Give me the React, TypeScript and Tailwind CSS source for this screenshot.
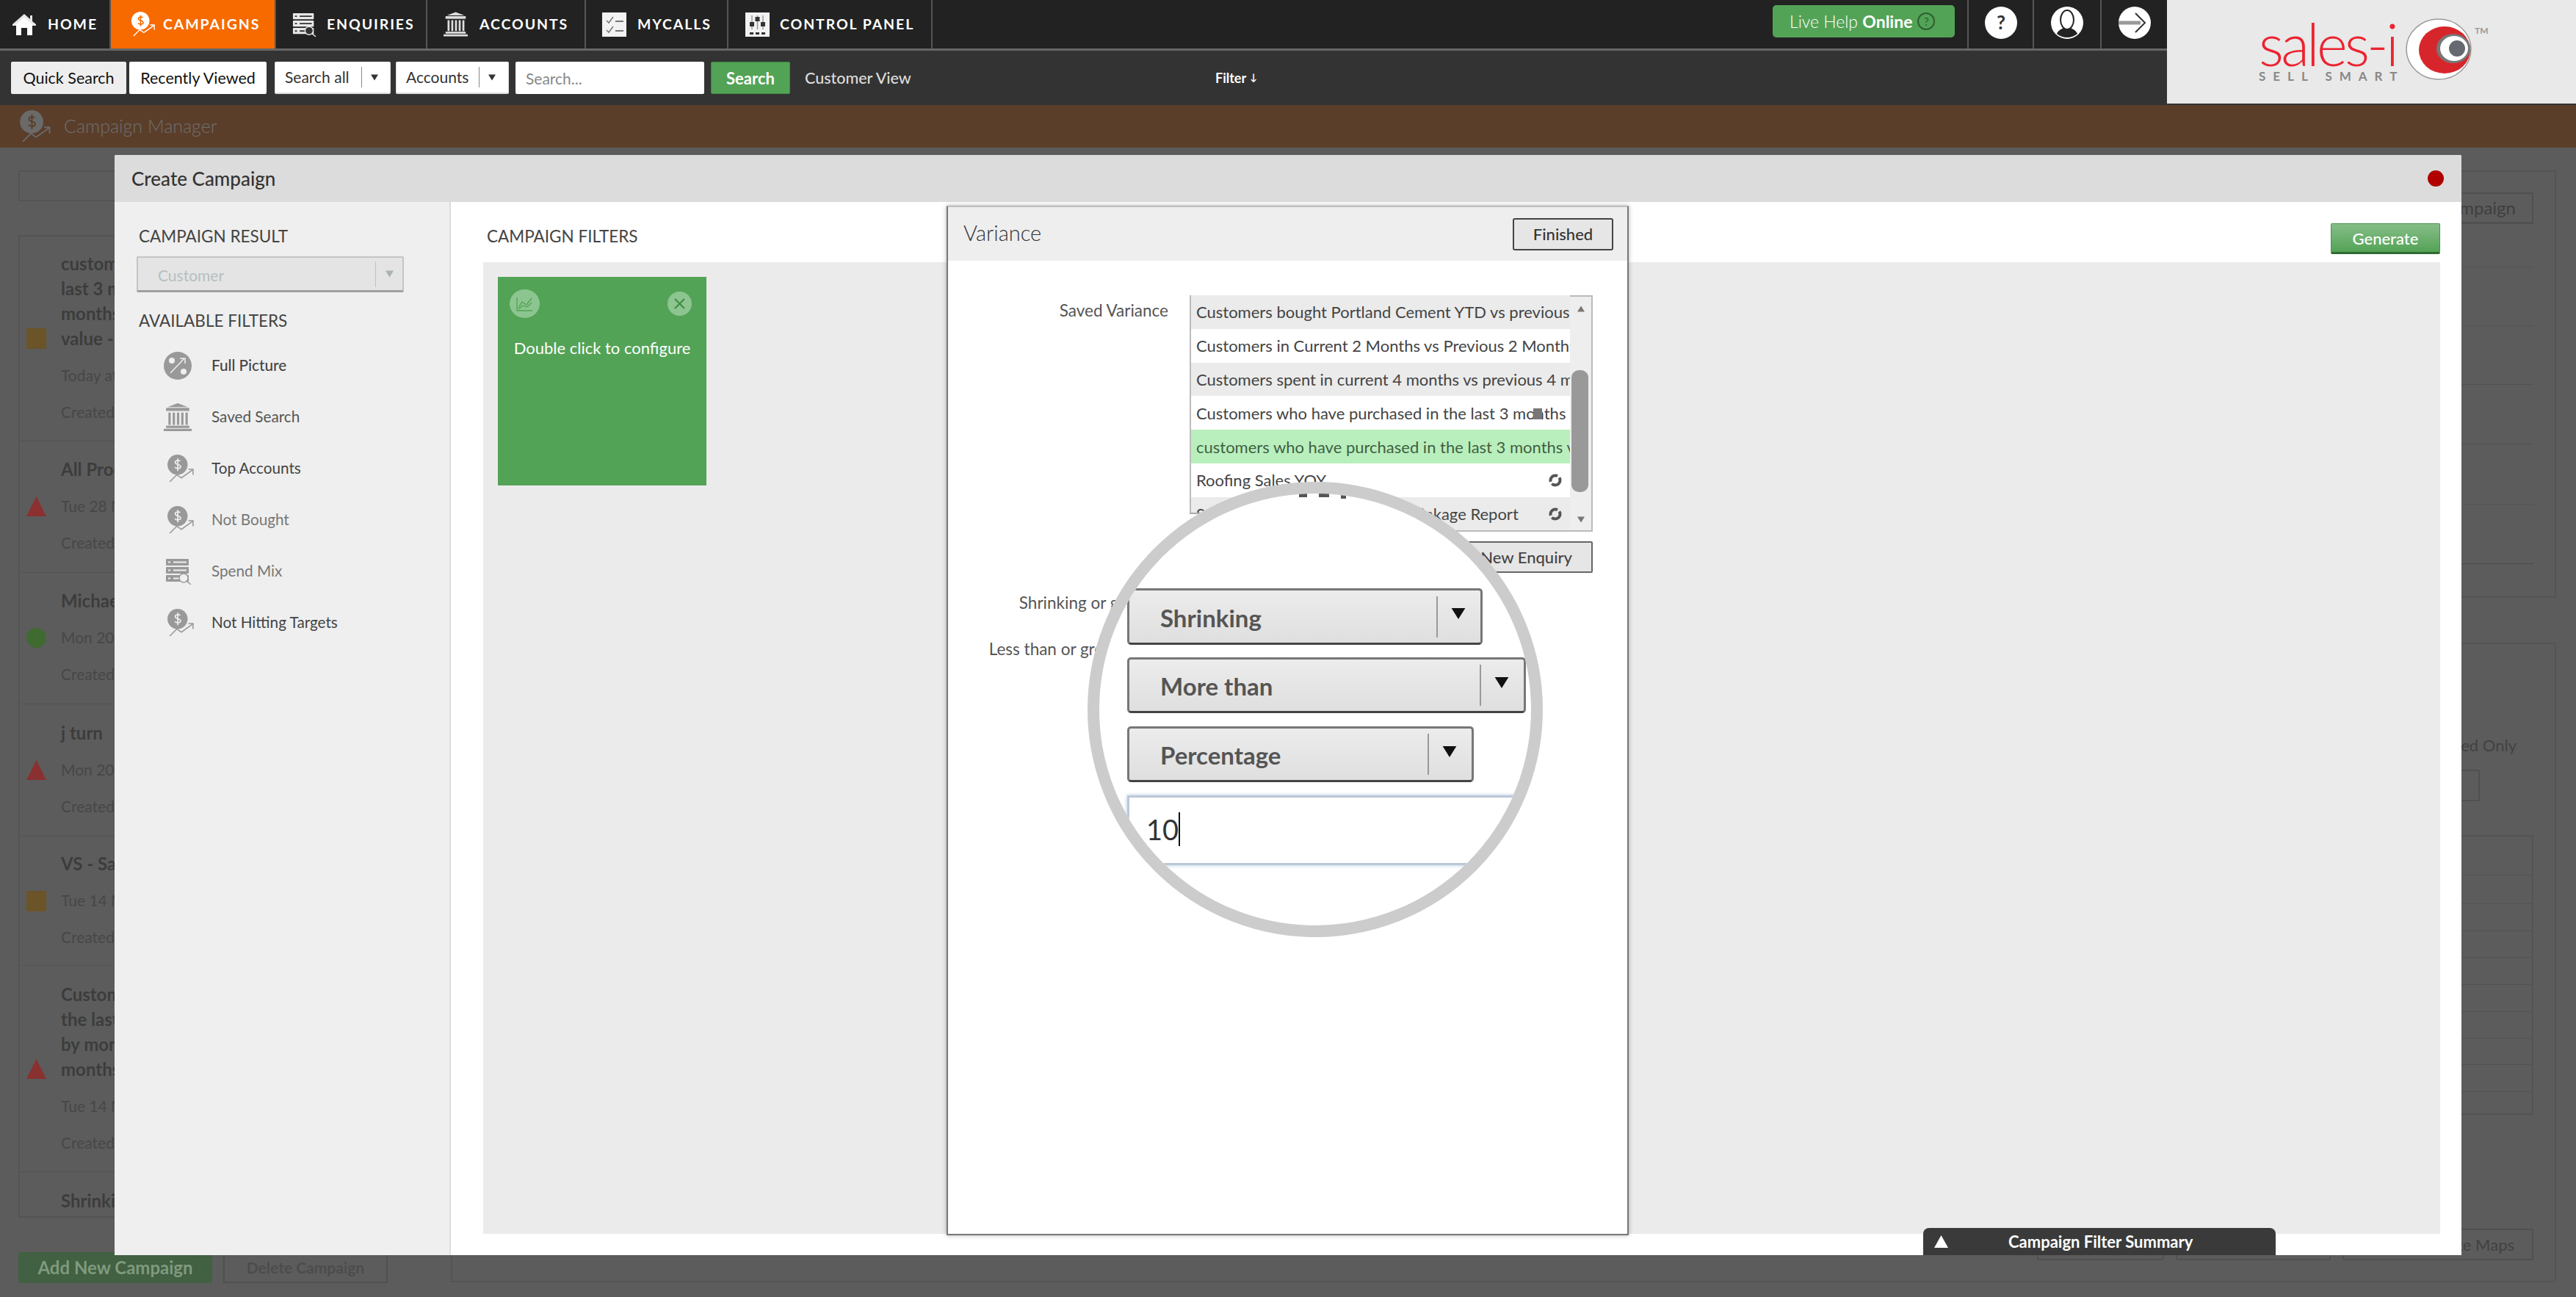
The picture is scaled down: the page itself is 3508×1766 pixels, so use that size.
import React from "react";

type IP = { className?: string; c?: string; d?: string };

const Home = ({ className }: IP) => (
  <svg viewBox="0 0 32 30" className={className}>
    <path d="M16 1 L24 8 V3 H27 V11 L32 15 V17 H0 V15 Z" fill="#e8e8e8" />
    <path d="M5 15 L16 6 L27 15 V30 H20 V20 H12 V30 H5 Z" fill="#fff" />
  </svg>
);
const Coin = ({ className, c = "#999", d = "#eee" }: IP) => (
  <svg viewBox="0 0 36 36" className={className}>
    <circle cx="14" cy="13" r="13" fill={c} />
    <path d="M17.5 8.5C16 7 11 7 11 10c0 3.5 7 2 7 5.5 0 3-5.5 3-7.5 1M14.300 5v16" fill="none" stroke={d} strokeWidth="1.600" />
    <path d="M4 35 L13 26 L19 30 L33 20 M28 19 H34 V26" fill="none" stroke={c} strokeWidth="1.500" />
  </svg>
);
const ListSearch = ({ className, c = "#999", d = "#eee" }: IP) => (
  <svg viewBox="0 0 36 36" className={className}>
    <rect x="1" y="1" width="31" height="9" rx="1" fill={c} />
    <rect x="1" y="12" width="31" height="9" rx="1" fill={c} />
    <rect x="1" y="23" width="31" height="9" rx="1" fill={c} />
    <path d="M4 5.500h3M11 5.500h18M4 16.500h3M11 16.500h18M4 27.500h3M11 27.500h8" stroke={d} strokeWidth="2" />
    <circle cx="25" cy="27" r="6" fill={d} stroke={c} strokeWidth="1.500" />
    <path d="M29.500 31.500 L35 36" stroke={c} strokeWidth="1.500" />
  </svg>
);
const Bank = ({ className, c = "#999" }: IP) => (
  <svg viewBox="0 0 36 36" className={className}>
    <path d="M18 0 L31 5 H5 Z" fill={c} />
    <rect x="3" y="6" width="30" height="4" fill={c} />
    <path d="M6 12h3v16h-3zM11.500 12h3v16h-3zM17 12h3v16h-3zM22.500 12h3v16h-3zM28 12h3v16h-3z" fill={c} />
    <rect x="3" y="29" width="30" height="3" fill={c} />
    <rect x="0" y="33" width="36" height="3" fill={c} />
  </svg>
);
const Check = ({ className }: IP) => (
  <svg viewBox="0 0 33 33" className={className}>
    <rect width="33" height="33" fill="#f2f2f2" />
    <path d="M6 11 L9 14 L15 6 M6 24 L9 27 L15 19" fill="none" stroke="#777" strokeWidth="1.500" />
    <path d="M18 12h11M18 25h11" stroke="#777" strokeWidth="2" />
  </svg>
);
const Sliders = ({ className }: IP) => (
  <svg viewBox="0 0 33 33" className={className}>
    <rect width="33" height="33" fill="#f2f2f2" />
    <path d="M9 4v19M16.500 4v19M24 4v19" stroke="#999" strokeWidth="1.500" />
    <rect x="6" y="13" width="6" height="6" fill="#333" />
    <rect x="13.500" y="6" width="6" height="6" fill="#333" />
    <rect x="21" y="13" width="6" height="6" fill="#333" />
    <path d="M6 27h5v3H6zM14 27h5v3h-5zM22 27h5v3h-5z" fill="#333" />
  </svg>
);
const Percent = ({ className }: IP) => (
  <svg viewBox="0 0 40 38" className={className}>
    <circle cx="20" cy="19" r="19" fill="#999" />
    <circle cx="12" cy="12" r="4" fill="#efefef" />
    <circle cx="28" cy="27" r="4" fill="#efefef" />
    <path d="M10 29 L29 9 M23 9 H30 V16" fill="none" stroke="#efefef" strokeWidth="1.500" />
  </svg>
);
const Tri = ({ className }: IP) => (
  <svg viewBox="0 0 10 8" className={className}>
    <path d="M0 0H10L5 8Z" fill="currentColor" />
  </svg>
);
const Refresh = () => (
  <svg viewBox="0 0 20 20" className="w-5 h-5">
    <circle cx="10" cy="10" r="6.500" fill="none" stroke="#555" strokeWidth="4" strokeDasharray="15 3" />
  </svg>
);

const navItems = [
  { label: "HOME", Icon: Home, w: "w-[151px]", pad: "pl-[17px]", gap: "gap-[16px]", ic: "w-[32px] h-[30px]" },
  { label: "CAMPAIGNS", Icon: Coin, w: "w-[225px]", pad: "pl-[27px]", gap: "gap-[10px]", ic: "w-[34px] h-[34px]", active: true },
  { label: "ENQUIRIES", Icon: ListSearch, w: "w-[206px]", pad: "pl-[22px]", gap: "gap-[14px]", ic: "w-[33px] h-[33px]" },
  { label: "ACCOUNTS", Icon: Bank, w: "w-[216px]", pad: "pl-[22px]", gap: "gap-[16px]", ic: "w-[33px] h-[34px]" },
  { label: "MYCALLS", Icon: Check, w: "w-[194px]", pad: "pl-[22px]", gap: "gap-[15px]", ic: "w-[33px] h-[33px]" },
  { label: "CONTROL PANEL", Icon: Sliders, w: "w-[278px]", pad: "pl-[23px]", gap: "gap-[14px]", ic: "w-[33px] h-[35px]" },
];

const TopNav = () => (
  <div className="h-[69px] bg-[#222222] border-b-[3px] border-[#666666] flex">
    {navItems.map((n) => (
      <div
        key={n.label}
        className={`${n.w} ${n.pad} ${n.gap} flex items-center border-r-2 border-[#555555] text-white text-[19.500px] font-bold tracking-[1.900px] whitespace-nowrap ${n.active ? "bg-[#f66a00]" : ""}`}
      >
        {n.active ? <n.Icon className={n.ic} c="#fff" d="#f66a00" /> : n.label === "ENQUIRIES" ? <n.Icon className={n.ic} c="#e8e8e8" d="#333" /> : n.label === "ACCOUNTS" ? <n.Icon className={n.ic} c="#ddd" /> : <n.Icon className={n.ic} />}
        <span>{n.label}</span>
      </div>
    ))}
    <div className="ml-auto flex items-start">
      <div className="mt-[7px] mr-[17px] w-[248px] h-[44px] rounded-[5px] bg-[#53a356] flex items-center pl-[23px] gap-[7px] text-white text-[23px] whitespace-nowrap">
        <span className="font-light">Live Help <b className="font-bold">Online</b></span>
        <span className="w-[24px] h-[24px] rounded-full border-2 border-[#2f5f32] text-[15px] leading-[20px] text-center text-[#2f5f32]">?</span>
      </div>
      <div className="w-[89px] h-[66px] border-l-2 border-[#555555] flex items-center justify-center pb-[4px]">
        <svg viewBox="0 0 44 44" className="w-[44px] h-[44px]">
          <circle cx="22" cy="22" r="22" fill="#fff" />
          <text x="22" y="31" textAnchor="middle" fontSize="26" fontWeight="700" fill="#333" fontFamily="Lato, sans-serif">?</text>
        </svg>
      </div>
      <div className="w-[92px] h-[66px] border-l-2 border-[#555555] flex items-center justify-center pb-[4px]">
        <svg viewBox="0 0 44 44" className="w-[44px] h-[44px]">
          <circle cx="22" cy="22" r="22" fill="#fff" />
          <path d="M8 37 C10 32 14 31 17 29 H27 C30 31 34 32 36 37 A22 22 0 0 1 8 37Z" fill="#222" />
          <ellipse cx="22" cy="18" rx="9" ry="13" fill="#fff" stroke="#222" strokeWidth="2" />
        </svg>
      </div>
      <div className="w-[91px] h-[66px] border-l-2 border-[#555555] flex items-center justify-center pb-[4px]">
        <svg viewBox="0 0 44 44" className="w-[44px] h-[44px]">
          <circle cx="22" cy="22" r="22" fill="#fff" />
          <path d="M0 22H30" stroke="#999" strokeWidth="5" />
          <path d="M23 9 L36 22 L23 35" fill="none" stroke="#333" strokeWidth="2" />
        </svg>
      </div>
    </div>
  </div>
);

const MiniSelect = ({ label, w, div }: { label: string; w: string; div: string }) => (
  <div className={`${w} h-[44px] bg-white border-b-2 border-x border-[#dddddd] rounded-[2px] flex items-center pl-[13px] text-[21px] text-[#333333] whitespace-nowrap`}>
    <span className={div}>{label}</span>
    <span className="w-px h-[28px] bg-[#888888]" />
    <Tri className="w-[10px] h-[9px] ml-[12px] text-[#333333]" />
  </div>
);

const SearchBar = () => (
  <div className="h-[74px] bg-[#333333] flex items-center pl-[15px] whitespace-nowrap text-[21.500px]">
    <div className="w-[157px] h-[44px] bg-[#eeeeee] flex items-center justify-center text-[#111111] rounded-[2px]">Quick Search</div>
    <div className="w-[187px] h-[44px] ml-[4px] bg-white flex items-center justify-center text-[#111111] rounded-[2px]">Recently Viewed</div>
    <div className="ml-[11px]"><MiniSelect label="Search all" w="w-[158px]" div="w-[104px]" /></div>
    <div className="ml-[7px]"><MiniSelect label="Accounts" w="w-[154px]" div="w-[99px]" /></div>
    <input readOnly placeholder="Search..." className="ml-[9px] w-[257px] h-[44px] bg-white pl-[14px] text-[21px] rounded-[2px] placeholder:text-[#888888] outline-none" />
    <div className="ml-[9px] w-[108px] h-[44px] bg-[#53a356] border border-[#3c8a40] text-white text-[22px] font-bold flex items-center justify-center rounded-[2px]">Search</div>
    <div className="ml-[20px] w-[148px] text-[#dddddd] text-[21.500px] font-medium">Customer View</div>
    <div className="ml-[411px] text-white font-bold text-[18px] flex items-center gap-[5px]">Filter <span className="text-[13px]">↓</span></div>
  </div>
);

const Logo = () => (
  <div className="w-[557px] h-[141px] bg-[#e9e9e9] flex items-start pl-[125px] pt-[25px] relative">
    <div className="flex flex-col w-[200px]">
      <div className="text-[80px] leading-[58px] mt-[5px] font-light tracking-[-3.800px] text-[#ec2330] whitespace-nowrap h-[58px]">sales-i</div>
      <div className="text-[17px] leading-[14px] mt-[9px] font-bold tracking-[10px] text-[#888888] whitespace-nowrap">SELL SMART</div>
    </div>
    <svg viewBox="0 0 90 84" className="w-[90px] h-[84px]">
      <ellipse cx="45" cy="42" rx="44" ry="41" fill="#fff" stroke="#999" strokeWidth="1.500" />
      <ellipse cx="53" cy="43" rx="35" ry="32" fill="#d7262b" />
      <ellipse cx="65" cy="41" rx="23" ry="20" fill="#777" />
      <ellipse cx="66" cy="41" rx="19" ry="17" fill="#fff" />
      <circle cx="70" cy="41" r="11" fill="#666a70" />
    </svg>
    <span className="text-[12px] font-bold text-[#999999] mt-[8px] ml-[4px]">TM</span>
  </div>
);

const Row = ({ children, mark, h, start }: { children: React.ReactNode; mark?: "sq" | "tri" | "dot"; h: string; start?: boolean }) => (
  <div className={`${h} border-b border-[#535353] last:border-b-0 flex ${start ? "items-start pt-[22px]" : "items-center"} pl-[9px] gap-[20px] whitespace-nowrap overflow-hidden`}>
    <div className="w-[27px] flex justify-center shrink-0">
      {mark === "sq" && <div className="w-[27px] h-[28px] bg-[#6a5428]" />}
      {mark === "dot" && <div className="w-[27px] h-[27px] rounded-full bg-[#3f6b30]" />}
      {mark === "tri" && (
        <svg viewBox="0 0 27 27" className="w-[27px] h-[27px]">
          <path d="M13.500 0L27 27H0Z" fill="#8a3030" />
        </svg>
      )}
    </div>
    <div className={start ? "" : "pb-[3px]"}>{children}</div>
  </div>
);
const T = ({ children }: { children: React.ReactNode }) => <div className="text-[24px] leading-[34px] font-bold text-[#3c3c3c]">{children}</div>;
const M = ({ children, first }: { children: React.ReactNode; first?: boolean }) => (
  <div className={`text-[21px] leading-[30px] text-[#474747] ${first ? "mt-[18px]" : "mt-[20px]"}`}>{children}</div>
);

const PageBehind = () => (
  <div className="flex pl-[25px] pt-[31px] gap-[24px]">
    <div className="w-[565px] flex flex-col">
      <div className="h-[42px] border-2 border-[#545454]" />
      <div className="mt-[46px] h-[1338px] border-2 border-[#545454] flex flex-col">
        <Row h="h-[279px]" mark="sq"><T>customers</T><T>last 3 months</T><T>months</T><T>value -</T><M first>Today at</M><M>Created by</M></Row>
        <Row h="h-[179px]" mark="tri"><T>All Products</T><M first>Tue 28 Mar</M><M>Created by</M></Row>
        <Row h="h-[179px]" mark="dot"><T>Michael</T><M first>Mon 20 Mar</M><M>Created by</M></Row>
        <Row h="h-[181px]" mark="tri"><T>j turn</T><M first>Mon 20 Mar</M><M>Created by</M></Row>
        <Row h="h-[176px]" mark="sq"><T>VS - Sales</T><M first>Tue 14 Mar</M><M>Created by</M></Row>
        <Row h="h-[281px]" mark="tri"><T>Customers</T><T>the last</T><T>by month</T><T>months</T><M first>Tue 14 Mar</M><M>Created by</M></Row>
        <Row h="h-[60px]" start><T>Shrinking</T></Row>
      </div>
      <div className="mt-[47px] flex gap-[15px]">
        <div className="w-[264px] h-[42px] bg-[#426042] rounded-[2px] text-[#7f9a7f] text-[24px] font-bold flex items-center justify-center whitespace-nowrap">Add New Campaign</div>
        <div className="w-[224px] h-[42px] border-2 border-[#505050] rounded-[2px] text-[#4c4c4c] text-[21px] font-bold flex items-center justify-center whitespace-nowrap">Delete Campaign</div>
      </div>
    </div>
    <div className="w-[2867px] flex flex-col">
      <div className="h-[582px] border-2 border-[#545454] flex flex-col items-end pr-[29px] pt-[28px]">
        <div className="w-[250px] h-[43px] border-2 border-[#505050] border-b-[3px] rounded-[2px] flex items-center justify-end pr-[22px] text-[#3f3f3f] text-[24px]">Campaign</div>
        <div className="w-[2000px] h-[59px] border-b border-[#535353]" />
        <div className="w-[2000px] h-[80px] border-b border-[#535353]" />
        <div className="w-[2000px] h-[80px] border-b border-[#535353]" />
        <div className="w-[2000px] h-[81px] border-b border-[#535353]" />
        <div className="w-[2000px] h-[82px] border-b border-[#535353]" />
        <div className="w-[2000px] h-[81px] border-b border-[#4c4c4c]" />
      </div>
      <div className="mt-[61px] h-[871px] border-2 border-[#545454] flex flex-col items-end pr-[29px] pt-[124px]">
        <div className="leading-[28px] text-[22px] text-[#424242] pr-[23px] whitespace-nowrap">Shared Only</div>
        <div className="mt-[19px] mr-[73px] w-[200px] h-[43px] border-2 border-[#505050] rounded-[2px]" />
        <div className="mt-[46px] w-[2000px] border-2 border-[#545454] flex flex-col">
          <div className="h-[53px] border-b border-[#535353]" />
          <div className="h-[39px] border-b border-[#535353]" />
          <div className="h-[37px] border-b border-[#535353]" />
          <div className="h-[36px] border-b border-[#535353]" />
          <div className="h-[37px] border-b border-[#535353]" />
          <div className="h-[37px] border-b border-[#535353]" />
          <div className="h-[36px] border-b border-[#535353]" />
          <div className="h-[36px] border-b border-[#535353]" />
          <div className="h-[37px] border-b border-[#535353]" />
          <div className="h-[29px]" />
        </div>
        <div className="mt-[155px] flex gap-[16px]">
          <div className="w-[173px] h-[43px] border-2 border-[#505050] rounded-[2px]" />
          <div className="w-[211px] h-[43px] border-2 border-[#505050] rounded-[2px]" />
          <div className="w-[260px] h-[43px] border-2 border-[#505050] rounded-[2px] flex items-center justify-end pr-[24px] text-[22px] text-[#424242]">Route Maps</div>
        </div>
      </div>
    </div>
  </div>
);

const filters = [
  { label: "Full Picture", Icon: Percent, ic: "w-[40px] h-[38px]", cls: "text-[#444444] font-medium", ml: "" },
  { label: "Saved Search", Icon: Bank, ic: "w-[40px] h-[38px]", cls: "text-[#555555]", ml: "" },
  { label: "Top Accounts", Icon: Coin, ic: "w-[38px] h-[38px]", cls: "text-[#444444]", ml: "ml-[5px]" },
  { label: "Not Bought", Icon: Coin, ic: "w-[38px] h-[38px]", cls: "text-[#777777]", ml: "ml-[5px]" },
  { label: "Spend Mix", Icon: ListSearch, ic: "w-[38px] h-[36px]", cls: "text-[#777777]", ml: "ml-[2px]" },
  { label: "Not Hitting Targets", Icon: Coin, ic: "w-[38px] h-[38px]", cls: "text-[#444444]", ml: "ml-[5px]" },
];

const Sidebar = () => (
  <div className="w-[458px] shrink-0 bg-[#efefef] border-r-2 border-[#dddddd] pl-[33px]">
    <div className="mt-[33px] text-[22.500px] leading-[28px] text-[#444444] whitespace-nowrap">CAMPAIGN RESULT</div>
    <div className="mt-[13px] -ml-[3px] w-[364px] h-[49px] bg-[#e4e4e4] border-2 border-[#c4c4c4] border-b-[3px] border-b-[#a0a0a0] rounded-[2px] flex items-center pl-[27px] text-[21px] text-[#b5bfc0]">
      <span className="w-[296px] pt-[3px]">Customer</span>
      <span className="w-px h-[35px] bg-[#c0c0c0]" />
      <Tri className="w-[11px] h-[10px] ml-[13px] text-[#a9b2b3]" />
    </div>
    <div className="mt-[25px] text-[22.500px] leading-[28px] text-[#444444] whitespace-nowrap">AVAILABLE FILTERS</div>
    <div className="mt-[12px] flex flex-col pl-[33px]">
      {filters.map((f) => (
        <div key={f.label} className="h-[70px] flex items-center text-[20.700px] whitespace-nowrap">
          <div className="w-[66px]">
            <div className={f.ml}><f.Icon className={f.ic} c="#999" d="#efefef" /></div>
          </div>
          <span className={f.cls}>{f.label}</span>
        </div>
      ))}
    </div>
  </div>
);

const rows = [
  { t: "Customers bought Portland Cement YTD vs previous year", bg: "bg-[#ebebeb]" },
  { t: "Customers in Current 2 Months vs Previous 2 Months", bg: "bg-white" },
  { t: "Customers spent in current 4 months vs previous 4 months", bg: "bg-[#ebebeb]" },
  { t: "Customers who have purchased in the last 3 months", bg: "bg-white", lock: true },
  { t: "customers who have purchased in the last 3 months vs", bg: "bg-[#b9efbd]", c: "text-[#3f5f42]" },
  { t: "Roofing Sales YOY", bg: "bg-white", r: true },
  { t: "Sales Group Monthly Spend Shrinkage Report", bg: "bg-[#ebebeb]", r: true },
];

const Dropdown = ({ label, w, mt, h }: { label: string; w: string; mt: string; h: string }) => (
  <div className={`${w} ${mt} ${h} shrink-0 bg-gradient-to-b from-[#ececec] to-[#dfdfdf] border-[3px] border-[#777777] border-b-[#444444] rounded-[5px] flex items-center pl-[42px] pr-[20px] text-[33px] font-bold text-[#555555] whitespace-nowrap`}>
    <span className="flex-1 pt-[4px]">{label}</span>
    <span className="w-[2px] h-[56px] bg-[#999999]" />
    <Tri className="w-[20px] h-[15px] ml-[18px] -mt-[8px] text-[#111111]" />
  </div>
);

const Variance = () => (
  <div className="absolute left-[1133px] top-[69px] w-[929px] h-[1402px] bg-white border-2 border-[#777777] border-t-[#bbbbbb] shadow-[0_0_6px_rgba(0,0,0,0.3)] flex flex-col">
    <div className="h-[73px] bg-[#eeeeee] flex items-center justify-between pl-[21px] pr-[19px]">
      <span className="text-[29px] font-light text-[#333333] -mt-[4px]">Variance</span>
      <div className="w-[137px] h-[44px] bg-[#e6e6e6] border-2 border-[#444444] rounded-[3px] flex items-center justify-center text-[22px] font-medium text-[#333333]">Finished</div>
    </div>
    <div className="pt-[47px] flex">
      <div className="w-[300px] text-right text-[22.500px] leading-[24px] mt-[9px] text-[#555555]">Saved Variance</div>
      <div className="ml-[29px] w-[549px] h-[322px] border-2 border-[#bbbbbb] relative flex">
        <div className="flex-1 min-w-0 flex flex-col -mt-[2px] overflow-hidden">
          {rows.map((r) => (
            <div key={r.t} className={`h-[45.800px] shrink-0 ${r.bg} ${r.c ?? "text-[#444444]"} relative flex items-center pl-[7px] text-[22px] whitespace-nowrap overflow-hidden`}>
              {r.t}
              {r.lock && <span className="absolute right-[38px] top-[17px] w-[12px] h-[15px] bg-[#777777]" />}
              {r.r && <span className="absolute right-[10px] top-[13px]"><Refresh /></span>}
            </div>
          ))}
        </div>
        <div className="w-[29px] shrink-0 bg-[#eeeeee] flex flex-col items-center relative">
          <Tri className="w-[10px] h-[9px] mt-[12px] rotate-180 text-[#777777]" />
          <div className="absolute left-[2px] top-[100px] w-[23px] h-[166px] rounded-[10px] bg-[#999999]" />
          <Tri className="w-[10px] h-[9px] mt-auto mb-[10px] text-[#777777]" />
        </div>
        <div className="absolute -left-[2px] -bottom-[2px] w-[300px] h-[26px] bg-white border-t-2 border-[#aaaaaa]" />
      </div>
    </div>
    <div className="self-end mr-[47px] mt-[13px] w-[188px] h-[43px] bg-[#e6e6e6] border-2 border-[#666666] rounded-[2px] flex items-center justify-end pr-[26px] text-[22px] font-medium text-[#444444]">New Enquiry</div>
    <div className="w-[300px] text-right text-[22.500px] leading-[24px] mt-[29px] text-[#555555] whitespace-nowrap">Shrinking or growing</div>
    <div className="w-[300px] text-right text-[22.500px] leading-[24px] mt-[39px] text-[#555555] whitespace-nowrap">Less than or greater than</div>
    <div className="absolute left-[190px] top-[374px] w-[620px] h-[620px] rounded-full border-[16px] border-[#cccccc] bg-white overflow-hidden flex flex-col items-start pl-[38px] pt-[129px]">
      <div className="absolute left-[272px] top-0 flex items-start gap-[16px]">
        <span className="w-[11px] h-[5px] bg-[#555555]" />
        <span className="w-[14px] h-[5px] bg-[#555555]" />
        <span className="w-[7px] h-[7px] bg-[#555555]" />
      </div>
      <Dropdown label="Shrinking" w="w-[484px]" mt="" h="h-[77px]" />
      <Dropdown label="More than" w="w-[543px]" mt="mt-[17px]" h="h-[76px]" />
      <Dropdown label="Percentage" w="w-[472px]" mt="mt-[18px]" h="h-[76px]" />
      <div className="mt-[18px] w-[600px] h-[95px] shrink-0 bg-white border-[3px] border-[#bcc8d6] shadow-[0_0_5px_rgba(120,160,210,0.6)] flex items-center pl-[23px] pb-[4px] text-[38px] text-[#333333]">
        <span className="border-r-2 border-[#111111] leading-[46px]">10</span>
      </div>
    </div>
  </div>
);

const Modal = () => (
  <div className="absolute left-[156px] top-[211px] w-[3196px] h-[1498px] flex flex-col rounded-t-[2px] overflow-hidden bg-white">
    <div className="h-[64px] shrink-0 bg-[#dcdcdc] flex items-center justify-between pl-[23px] pr-[24px]">
      <span className="text-[26px] font-medium text-[#333333]">Create Campaign</span>
      <span className="w-[22px] h-[22px] rounded-full bg-[#b00000]" />
    </div>
    <div className="flex flex-1 min-h-0">
      <Sidebar />
      <div className="flex-1 flex flex-col pl-[44px] pr-[29px] pb-[29px]">
        <div className="h-[82px] shrink-0 flex justify-between items-start">
          <span className="mt-[33px] ml-[5px] text-[22.500px] leading-[28px] text-[#444444]">CAMPAIGN FILTERS</span>
          <div className="mt-[29px] w-[149px] h-[42px] bg-gradient-to-b from-[#86bd88] to-[#53a356] border border-[#4a924d] border-b-[3px] border-b-[#2f6b33] rounded-[2px] text-white text-[22px] font-medium flex items-center justify-center">Generate</div>
        </div>
        <div className="flex-1 bg-[#ebebeb] pl-[20px] pt-[20px]">
          <div className="w-[284px] h-[284px] bg-[#53a356] flex flex-col">
            <div className="flex items-start justify-between pl-[16px] pr-[20px] pt-[17px]">
              <svg viewBox="0 0 41 39" className="w-[41px] h-[39px]">
                <ellipse cx="20.500" cy="19.500" rx="20.500" ry="19.500" fill="#8cc58f" />
                <path d="M10 11V29H31M12 25L17 17L23 21L30 12M12 27L18 22L24 24L30 18" fill="none" stroke="#53a356" strokeWidth="1.300" />
              </svg>
              <svg viewBox="0 0 33 33" className="w-[33px] h-[33px] mt-[3px]">
                <circle cx="16.500" cy="16.500" r="16.500" fill="#8cc58f" />
                <path d="M10 10L23 23M23 10L10 23" stroke="#3f8a42" strokeWidth="2" />
              </svg>
            </div>
            <div className="mt-[24px] text-center text-white text-[22px] whitespace-nowrap">Double click to configure</div>
          </div>
        </div>
      </div>
    </div>
    <Variance />
    <div className="absolute left-[2463px] bottom-0 w-[480px] h-[37px] bg-[#3a3a3a] rounded-t-[8px] flex items-center pl-[15px] text-white text-[22px] font-bold whitespace-nowrap">
      <svg viewBox="0 0 19 17" className="w-[19px] h-[17px]"><path d="M9.500 0L19 17H0Z" fill="#fff" /></svg>
      <span className="ml-[82px]">Campaign Filter Summary</span>
    </div>
  </div>
);

export default function App() {
  return (
    <div className="relative w-[3508px] h-[1766px] overflow-hidden bg-[#5c5c5c] font-[Lato,sans-serif]">
      <div className="flex">
        <div className="w-[2951px] flex flex-col">
          <TopNav />
          <SearchBar />
        </div>
        <div className="bg-[#333333]">
          <Logo />
        </div>
      </div>
      <div className="h-[58px] bg-[#5a3e2a] flex items-center pl-[26px] gap-[17px] text-[#6f6f6f] text-[25px] font-light">
        <Coin className="w-[44px] h-[44px]" c="#6a6a6a" d="#5a3e2a" />
        <span>Campaign Manager</span>
      </div>
      <PageBehind />
      <Modal />
    </div>
  );
}
